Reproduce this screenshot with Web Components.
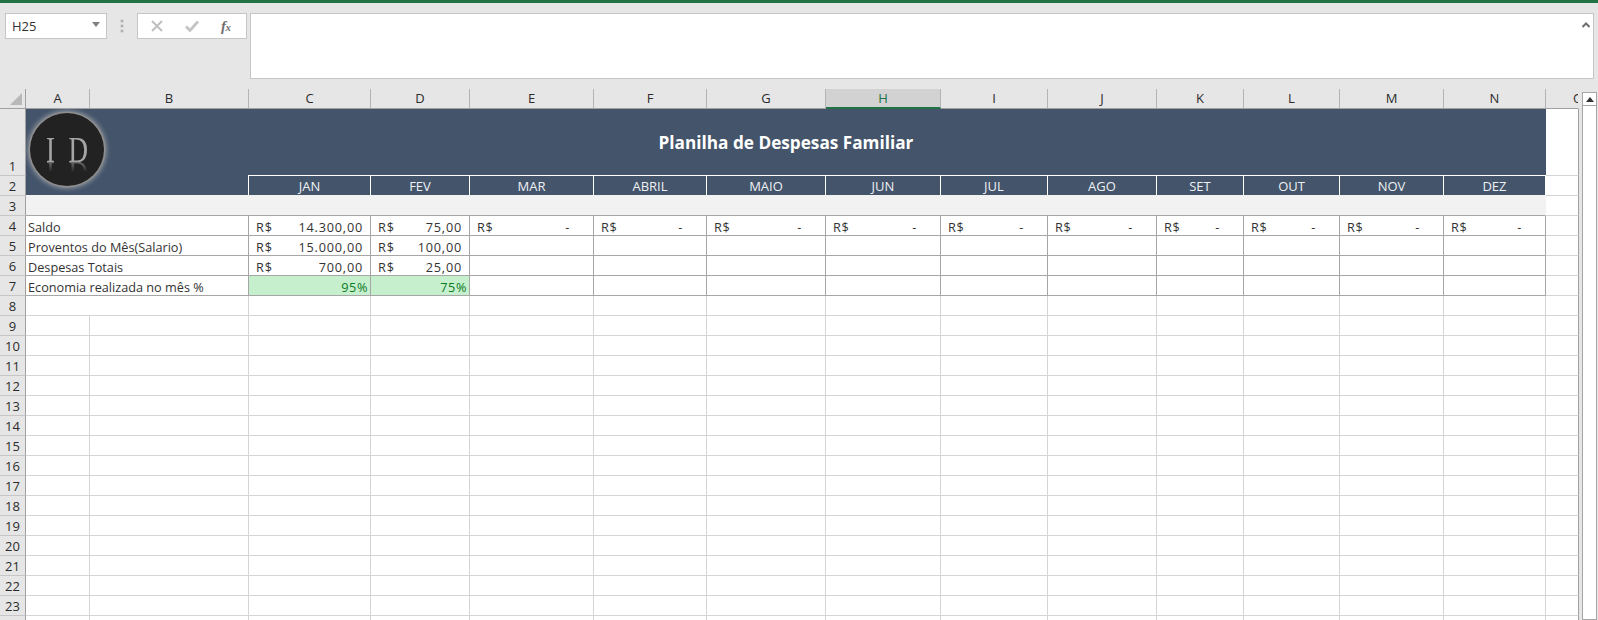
<!DOCTYPE html>
<html lang="pt-BR"><head><meta charset="utf-8"><title>Planilha</title>
<style>html,body{margin:0;padding:0;height:620px;overflow:hidden;background:#e6e6e6;font-family:"Open Sans","Noto Sans",sans-serif;color:#2b2b2b}</style>
</head><body>
<x-app></x-app>
<script>
const FONT='"Open Sans","Noto Sans",sans-serif';
class Base extends HTMLElement{
  constructor(){super();this.attachShadow({mode:'open'}).innerHTML=this.constructor.html;}
}
class XNameBox extends Base{static html=`<style>
:host{display:flex;align-items:center;justify-content:space-between;box-sizing:border-box;width:102px;height:26px;background:#fff;border:1px solid #c6c6c6;padding:0 6px 0 6px;font:13px ${FONT};color:#333}
i{width:0;height:0;border-left:4px solid transparent;border-right:4px solid transparent;border-top:5px solid #808080;margin-top:-3px}
</style><slot></slot><i></i>`}
class XGrip extends Base{static html=`<style>
:host{display:flex;flex-direction:column;align-items:center;gap:3px;width:30px;height:26px;justify-content:center;box-sizing:border-box}
i{width:2px;height:2px;background:#b0b0b0;box-shadow:0 0 0 .5px #c4c4c4}
</style><i></i><i></i><i></i>`}
class XFxBox extends Base{static html=`<style>
:host{display:flex;align-items:center;box-sizing:border-box;width:110px;height:26px;background:#fff;border:1px solid #c6c6c6}
svg{display:block;flex:none}
.x{margin-left:12px}.c{margin-left:20px}
.f{margin-left:21px;font:italic 700 15px "Liberation Serif",serif;color:#707070;letter-spacing:-.5px}
.f small{font-size:11px}
</style>
<svg class="x" width="14" height="14" viewBox="0 0 14 14"><path d="M2 2 12 12M12 2 2 12" stroke="#bfbfbf" stroke-width="2" fill="none"/></svg>
<svg class="c" width="16" height="14" viewBox="0 0 16 14"><path d="M2 7.5 6 11.5 14 2.5" stroke="#c4c4c4" stroke-width="2.8" fill="none"/></svg>
<span class="f">f<small>x</small></span>`}
class XFormulaInput extends Base{static html=`<style>
:host{display:block;position:relative;flex:1;box-sizing:border-box;height:66px;background:#fff;border:1px solid #c6c6c6;margin-right:4px}
svg{position:absolute;right:2px;top:7px}
</style><svg width="10" height="8" viewBox="0 0 10 8"><path d="M1.5 6 5 2.5 8.5 6" stroke="#707070" stroke-width="2" fill="none"/></svg>`}
class XFormulaBar extends Base{static html=`<style>
:host{display:flex;align-items:flex-start;box-sizing:border-box;height:86px;padding:10px 0 0 5px;background:#e6e6e6}
x-formula-input{margin-left:3px}
</style><x-name-box>H25</x-name-box><x-grip></x-grip><x-fx-box></x-fx-box><x-formula-input></x-formula-input>`}
class XColHead extends Base{static html=`<style>
:host{display:flex;align-items:center;justify-content:center;box-sizing:border-box;height:20px;background:#e6e6e6;border-right:1px solid #b4b4b4;border-bottom:1px solid #a0a0a0;font:13px ${FONT};color:#2b2b2b;overflow:hidden;padding-bottom:1px}
:host([sel]){background:#d2d2d2;color:#217346;border-bottom:2px solid #217346;padding-bottom:0}
:host([clip]){justify-content:flex-start;padding-left:27px;border-right:1px solid #e6e6e6}
</style><slot></slot>`}
class XCorner extends Base{static html=`<style>
:host{display:block;box-sizing:border-box;height:20px;background:#e6e6e6;border-right:1px solid #a0a0a0;border-bottom:1px solid #a0a0a0;padding:4px 0 0 10px}
svg{display:block}
</style><svg width="13" height="12" viewBox="0 0 13 12"><path d="M12 0V12H0Z" fill="#b8b8b8"/></svg>`}
class XRowHead extends Base{static html=`<style>
:host{display:flex;align-items:center;justify-content:center;box-sizing:border-box;background:#e6e6e6;border-right:1px solid #a0a0a0;border-bottom:1px solid #c6c6c6;font:13px ${FONT};color:#2b2b2b}
:host([tall]){align-items:flex-end;border-bottom:0}
:host([top]){border-top:1px solid #c6c6c6}
</style><slot></slot>`}
class XCell extends Base{static html=`<style>
:host{display:flex;align-items:center;box-sizing:border-box;min-width:0;background:#fff;border-right:1px solid #d4d4d4;border-bottom:1px solid #d4d4d4;font:12.7px ${FONT};color:#333;padding-top:2px;white-space:nowrap}
:host([k=edge]){border-right-color:#a0a0a0}
:host([k=edge-top]){border-right-color:#a0a0a0;border-top:1px solid #d4d4d4}
:host([k=edge-tall]){border-right-color:#a0a0a0;border-bottom:0}
:host([k=data]),:host([k=label]),:host([k=money]),:host([k=dash]),:host([k=pct]){border-right-color:#a6a6a6;border-bottom-color:#a6a6a6}
:host([k=label]){padding-left:2px}
:host([k=money]){justify-content:space-between;padding-left:7px;padding-right:7px;letter-spacing:.8px}
:host([k=dash]){justify-content:space-between;padding-left:7px;padding-right:23px;letter-spacing:.6px}
:host([k=pct]){justify-content:flex-end;padding-right:2px;background:#c6efce;color:#0b7a1c;letter-spacing:.6px}
:host([k=band]){background:#f2f2f2;border-right-color:#f2f2f2;border-bottom-color:#a6a6a6;padding:0}
:host([k=month]){justify-content:center;background:#44546a;color:#eef1f4;border-top:1px solid #fff;border-right-color:#fff;border-bottom-color:#f2f2f2;padding:0;font-size:13px}
:host([k=blue]){background:#44546a;border-right-color:#fff;border-bottom-color:#f2f2f2;padding:0}
:host([k=title]){position:relative;justify-content:center;background:#44546a;border:0;padding:0;color:#fff;font-weight:700;font-size:17.2px}
</style><slot></slot>`}
class XLogo extends Base{static html=`<style>
:host{position:absolute;left:4px;top:4px;width:74px;height:73px;box-sizing:border-box;border-radius:50%;background:#222;box-shadow:0 0 0 1.5px #8f8f8f,0 0 4px 3px rgba(190,190,190,.55);display:flex;align-items:flex-start;justify-content:center;font:400 36px "Liberation Serif",serif;color:#a6a6a6}
span{display:block;margin-top:19px;line-height:36px;white-space:pre;transform:scaleX(.75);-webkit-box-reflect:below -12px linear-gradient(transparent 55%,rgba(255,255,255,.6) 85%)}
</style><span>I  D</span>`}
class XScrollbar extends Base{static html=`<style>
:host{display:flex;flex-direction:column;box-sizing:border-box;width:19px;height:531px;padding:3px 0 0 3px;background:#e6e6e6}
.b{box-sizing:border-box;height:14px;width:15px;background:#fff;border:1px solid #a6a6a6;display:flex;align-items:center;justify-content:center}
.b i{width:0;height:0;border-left:4px solid transparent;border-right:4px solid transparent;border-bottom:5px solid #333}
.t{flex:1;box-sizing:border-box;width:15px;background:#fff;border:1px solid #a6a6a6;border-top:0}
</style><div class="b"><i></i></div><div class="t"></div>`}
class XSheet extends Base{
  static html=`<style>
:host{display:grid;flex:none;width:1579px;height:531px;overflow:hidden;grid-template-columns:26px 64px 159px 122px 99px 124px 113px 119px 115px 107px 109px 87px 96px 104px 102px 33px;grid-template-rows:20px 66px 21px repeat(22,20px);align-content:start;background:#fff}
.s2{grid-column:span 2}.s14{grid-column:span 14}
</style><div id="g" style="display:contents"></div>`;
  connectedCallback(){
    const cols='CDEFGHIJKLMN'.split('');
    const months=['JAN','FEV','MAR','ABRIL','MAIO','JUN','JUL','AGO','SET','OUT','NOV','DEZ'];
    const data={4:['Saldo',['14.300,00','75,00']],5:['Proventos do Mês(Salario)',['15.000,00','100,00']],6:['Despesas Totais',['700,00','25,00']],7:['Economia realizada no mês %',['95%','75%']]};
    let h='<x-corner></x-corner>';
    'ABCDEFGHIJKLMN'.split('').forEach(c=>h+=`<x-col-head${c==='H'?' sel':''}>${c}</x-col-head>`);
    h+='<x-col-head clip>O</x-col-head>';
    h+='<x-row-head tall>1</x-row-head><x-cell k="title" class="s14">Planilha de Despesas Familiar<x-logo></x-logo></x-cell><x-cell k="edge-tall"></x-cell>';
    h+='<x-row-head top>2</x-row-head><x-cell k="blue" class="s2"></x-cell>'+months.map(m=>`<x-cell k="month">${m}</x-cell>`).join('')+'<x-cell k="edge-top"></x-cell>';
    h+='<x-row-head>3</x-row-head><x-cell k="band" class="s14"></x-cell><x-cell k="edge"></x-cell>';
    for(let r=4;r<=7;r++){
      const [label,vals]=data[r];
      h+=`<x-row-head>${r}</x-row-head><x-cell k="label" class="s2">${label}</x-cell>`;
      cols.forEach((c,i)=>{
        if(r===7){h+=i<2?`<x-cell k="pct">${vals[i]}</x-cell>`:'<x-cell k="data"></x-cell>';return;}
        if(i<2){h+=`<x-cell k="money"><span>R$</span><span>${vals[i]}</span></x-cell>`;return;}
        h+=r===4?'<x-cell k="dash"><span>R$</span><span>-</span></x-cell>':'<x-cell k="data"></x-cell>';
      });
      h+='<x-cell k="edge"></x-cell>';
    }
    for(let r=8;r<=24;r++){
      h+=`<x-row-head>${r<24?r:''}</x-row-head>`;
      h+=r===8?'<x-cell class="s2"></x-cell>':'<x-cell></x-cell><x-cell></x-cell>';
      cols.forEach(()=>h+='<x-cell></x-cell>');
      h+='<x-cell k="edge"></x-cell>';
    }
    this.shadowRoot.getElementById('g').innerHTML=h;
  }
}
class XApp extends Base{static html=`<style>
:host{display:flex;flex-direction:column;width:1598px;height:620px;overflow:hidden;background:#e6e6e6}
.accent{height:3px;background:#217346;flex:none}
.main{display:flex;flex:1;min-height:0}
</style><div class="accent"></div><x-formula-bar></x-formula-bar><div class="main"><x-sheet></x-sheet><x-scrollbar></x-scrollbar></div>`}
const defs={'x-name-box':XNameBox,'x-grip':XGrip,'x-fx-box':XFxBox,'x-formula-input':XFormulaInput,'x-formula-bar':XFormulaBar,'x-col-head':XColHead,'x-corner':XCorner,'x-row-head':XRowHead,'x-cell':XCell,'x-logo':XLogo,'x-scrollbar':XScrollbar,'x-sheet':XSheet,'x-app':XApp};
for(const k in defs)customElements.define(k,defs[k]);
</script>
</body></html>
